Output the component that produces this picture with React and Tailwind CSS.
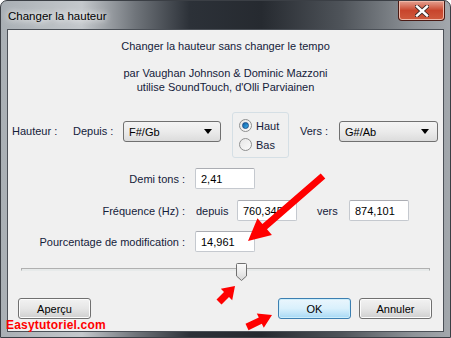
import React from 'react'

const FONT = { fontFamily: '"Liberation Sans", Arial, sans-serif' }

function Select({ value, className = '' }) {
  return (
    <div className={`h-[21px] flex items-center justify-between pl-[5px] pr-[8px] rounded-[3px] border border-[#707070] bg-gradient-to-b from-[#f4f4f4] via-[#ebebeb] to-[#dcdcdc] text-black ${className}`}>
      <span>{value}</span>
      <svg width="8" height="5" viewBox="0 0 8 5"><path d="M0 0h8L4 5z" fill="#000" /></svg>
    </div>
  )
}

function Field({ value, className = '' }) {
  return (
    <div className={`h-[21px] flex items-center pl-[5px] bg-white border border-[#c5c9cf] border-t-[#abadb3] rounded-[2px] text-black ${className}`}>
      {value}
    </div>
  )
}

function Radio({ checked, label }) {
  return (
    <div className="flex items-center gap-[4px] h-[19px]">
      <span className="w-[13px] h-[13px] rounded-full border border-[#8e8f8f] bg-gradient-to-br from-[#e6e6e6] to-[#fbfbfb] flex items-center justify-center">
        {checked && <span className="w-[7px] h-[7px] rounded-full bg-gradient-to-br from-[#0b5ea8] to-[#3fb0e8] border border-[#1a4d8a]" />}
      </span>
      <span>{label}</span>
    </div>
  )
}

function Button({ label, primary, className = '' }) {
  return (
    <div className={`w-[73px] h-[21px] flex items-center justify-center rounded-[3px] border text-black ${primary ? 'border-[#3c7fb1] bg-gradient-to-b from-[#eaf6fd] via-[#d9f0fc] to-[#a7d9f5] shadow-[inset_0_0_0_1px_#cdeefb]' : 'border-[#707070] bg-gradient-to-b from-[#f2f2f2] via-[#e6e6e6] to-[#cfcfcf] shadow-[inset_0_0_0_1px_#fcfcfc]'} ${className}`}>
      {label}
    </div>
  )
}

export default function App() {
  return (
    <div className="w-[451px] h-[338px] bg-white" style={FONT}>
      <div className="relative w-[451px] h-[338px] rounded-t-[7px] border border-[#3b3f45] overflow-hidden bg-[linear-gradient(to_right,#a9afb4_0%,#c4c8cc_18%,#6f747a_30%,#2c3138_42%,#262a30_58%,#4f545a_76%,#8f9499_92%,#a3a8ad_100%)] flex flex-col">
        {/* title bar */}
        <div className="h-[28px] flex items-start justify-between">
          <div className="pl-[7px] pt-[7px] text-[11.5px] text-black [text-shadow:0_0_6px_#fff,0_0_10px_#fff]">Changer la hauteur</div>
          <div className="mr-[5px] w-[47px] h-[20px] rounded-b-[4px] border border-t-0 border-[#4a1a14] bg-gradient-to-b from-[#e3a091] via-[#c8452c] to-[#cf5a3d] shadow-[inset_0_0_0_1px_#f0b8a8] flex items-center justify-center">
            <svg width="14" height="12" viewBox="0 0 14 12">
              <path d="M2 1.5L12 10.5M12 1.5L2 10.5" stroke="#3a2a28" strokeWidth="4.2" strokeLinecap="square" />
              <path d="M2 1.5L12 10.5M12 1.5L2 10.5" stroke="#ffffff" strokeWidth="2.4" strokeLinecap="square" />
            </svg>
          </div>
        </div>

        {/* client area */}
        <div className="mx-[6px] h-[303px] border border-[#4b5057] bg-[#f0f0f0] text-[11px] text-[#14213a] leading-[14px] flex flex-col">
          <div className="mt-[9px] text-center leading-[15px]">Changer la hauteur sans changer le tempo</div>
          <div className="mt-[12px] text-center">par Vaughan Johnson &amp; Dominic Mazzoni</div>
          <div className="text-center">utilise SoundTouch, d'Olli Parviainen</div>

          {/* pitch row */}
          <div className="mt-[18px] flex items-start pl-[4px]">
            <div className="w-[61px] mt-[12px]">Hauteur :</div>
            <div className="w-[50px] mt-[12px]">Depuis :</div>
            <Select value="F#/Gb" className="w-[98px] mt-[9px]" />
            <div className="ml-[11px] w-[57px] h-[46px] rounded-[3px] border border-[#d5dfe5] pl-[6px] pt-[3px] flex flex-col">
              <Radio checked label="Haut" />
              <Radio label="Bas" />
            </div>
            <div className="ml-[11px] w-[39px] mt-[12px]">Vers :</div>
            <Select value="G#/Ab" className="w-[99px] mt-[9px]" />
          </div>

          <div className="mt-[10px] flex items-center">
            <div className="w-[177px] text-right">Demi tons :</div>
            <Field value="2,41" className="ml-[10px] w-[60px]" />
          </div>

          <div className="mt-[11px] flex items-center">
            <div className="w-[177px] text-right">Fréquence (Hz) :</div>
            <div className="ml-[11px] w-[41px]">depuis</div>
            <Field value="760,345" className="w-[60px]" />
            <div className="ml-[20px] w-[32px]">vers</div>
            <Field value="874,101" className="w-[60px]" />
          </div>

          <div className="mt-[10px] flex items-center">
            <div className="w-[177px] text-right">Pourcentage de modification :</div>
            <Field value="14,961" className="ml-[10px] w-[60px]" />
          </div>

          {/* slider */}
          <div className="relative mt-[11px] h-[18px] mx-[13px]">
            <div className="absolute left-0 right-0 top-[5px] h-[3px] border border-[#b0b0b0] border-b-[#e7eaea] bg-[#e7eaea]" />
            <svg className="absolute left-[215px] top-0" width="11" height="18" viewBox="0 0 11 18">
              <defs>
                <linearGradient id="th" x1="0" y1="0" x2="0" y2="1">
                  <stop offset="0" stopColor="#fafafa" />
                  <stop offset="0.5" stopColor="#ececec" />
                  <stop offset="1" stopColor="#d6d6d6" />
                </linearGradient>
              </defs>
              <path d="M1.5 0.5h8a1 1 0 0 1 1 1v11.5l-5 4.5l-5-4.5V1.5a1 1 0 0 1 1-1z" fill="url(#th)" stroke="#707070" />
            </svg>
          </div>

          {/* buttons */}
          <div className="mt-[17px] flex items-center pl-[10px] pr-[11px]">
            <Button label="Aperçu" />
            <div className="flex-1" />
            <Button label="OK" primary />
            <Button label="Annuler" className="ml-[8px]" />
          </div>
        </div>

        {/* watermark */}
        <div className="absolute left-[5px] top-[315px] text-[12px] font-bold text-[#ff0000] tracking-[0.2px]">Easytutoriel.com</div>

        {/* red arrows */}
        <svg className="absolute left-0 top-0 pointer-events-none" width="451" height="338" viewBox="0 0 451 338">
          <polygon fill="#ff0000" points="324.3,177.6 266,228.2 270.9,233.9 247,240 256.5,217.3 261.4,223 319.7,172.4" />
          <polygon fill="#ff0000" points="220.5,303.5 228,296 231.2,299.2 234,285 219.8,287.8 223,291 215.5,298.5" />
          <polygon fill="#ff0000" points="247.5,329.2 260.8,322.8 262.8,326.8 271,314 255.8,312.4 257.8,316.4 244.5,322.8" />
        </svg>
      </div>
    </div>
  )
}
